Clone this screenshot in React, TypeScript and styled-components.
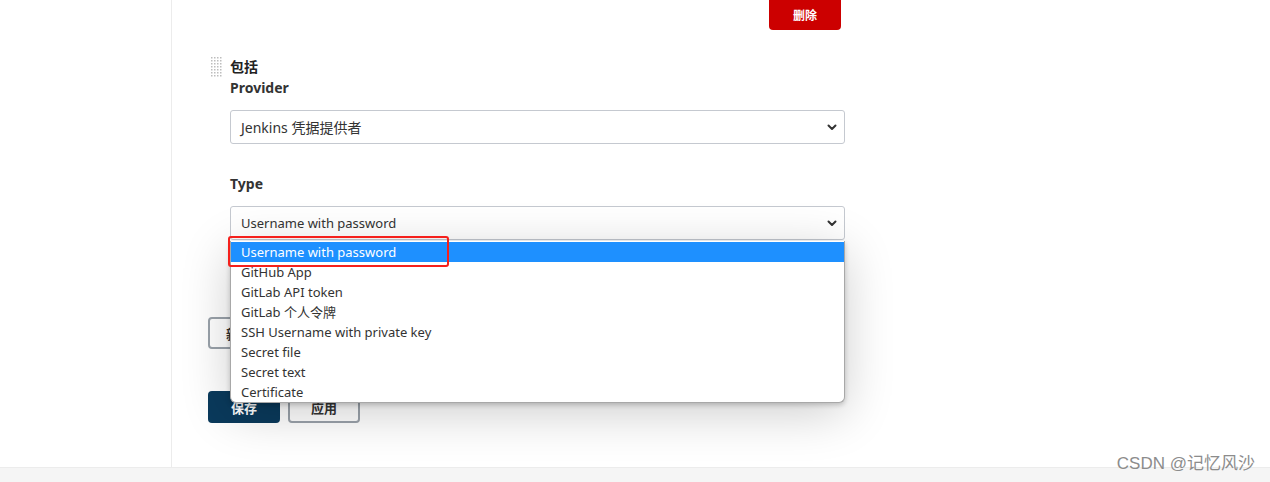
import styled, { createGlobalStyle } from "styled-components";

const GlobalStyle = createGlobalStyle`
  html, body {
    margin: 0;
    padding: 0;
    background: #fff;
    font-family: "Noto Sans", "Noto Sans CJK SC", sans-serif;
    color: #333;
  }
`;

const typeOptions = [
  "Username with password",
  "GitHub App",
  "GitLab API token",
  "GitLab 个人令牌",
  "SSH Username with private key",
  "Secret file",
  "Secret text",
  "Certificate",
];

const Chevron = () => (
  <svg width="10" height="7" viewBox="0 0 10 7">
    <polyline
      points="1.5,1.5 5,5 8.5,1.5"
      fill="none"
      stroke="#333"
      strokeWidth="2"
      strokeLinecap="round"
      strokeLinejoin="round"
    />
  </svg>
);

const DragHandle = () => (
  <svg width="12" height="21" viewBox="0 0 12 21">
    {Array.from({ length: 7 }).map((_, r) =>
      Array.from({ length: 4 }).map((_, c) => (
        <rect key={r + "_" + c} x={c * 3} y={r * 3} width="1.5" height="1.5" fill="#bdbdbd" />
      ))
    )}
  </svg>
);

export default function App() {
  return (
    <>
      <GlobalStyle />
      <Page>
        <Body>
          <Sidebar />
          <Main>
            <Form>
              <DeleteRow>
                <DeleteButton>删除</DeleteButton>
              </DeleteRow>

              <Chunk>
                <ChunkHeader>
                  <DragHandle />
                  <ChunkTitle>包括</ChunkTitle>
                </ChunkHeader>

                <Field>
                  <Label>Provider</Label>
                  <Select $size={14}>
                    <span>Jenkins 凭据提供者</span>
                    <Chevron />
                  </Select>
                </Field>

                <Field $gap={30}>
                  <Label>Type</Label>
                  <SelectWrap>
                    <Select>
                      <span>Username with password</span>
                      <Chevron />
                    </Select>
                    <Dropdown>
                      <Annotation />
                      {typeOptions.map((o, i) => (
                        <Option key={o} $active={i === 0}>
                          {o}
                        </Option>
                      ))}
                    </Dropdown>
                  </SelectWrap>
                </Field>
              </Chunk>

              <AddRow>
                <OutlineButton $wide>新增</OutlineButton>
              </AddRow>

              <Actions>
                <SaveButton>保存</SaveButton>
                <OutlineButton>应用</OutlineButton>
              </Actions>
            </Form>
          </Main>
        </Body>
        <Footer />
        <Watermark>CSDN @记忆风沙</Watermark>
      </Page>
    </>
  );
}

const Page = styled.div`
  position: relative;
  width: 1270px;
  height: 482px;
  overflow: hidden;
  display: flex;
  flex-direction: column;
`;

const Body = styled.div`
  display: flex;
  height: 468px;
`;

const Sidebar = styled.div`
  width: 171px;
  flex-shrink: 0;
  border-right: 1px solid #ececec;
`;

const Main = styled.div`
  flex: 1;
  padding-left: 36px;
`;

const Form = styled.div`
  width: 637px;
  display: flex;
  flex-direction: column;
`;

const DeleteRow = styled.div`
  display: flex;
  justify-content: flex-end;
  padding-right: 4px;
  margin-top: -6px;
`;

const DeleteButton = styled.button`
  width: 72px;
  height: 36px;
  border: none;
  border-radius: 4px;
  background: #cc0000;
  color: #fff;
  font-family: inherit;
  font-size: 12px;
  font-weight: 700;
  padding: 6px 0 0;
`;

const Chunk = styled.div`
  margin-top: 27px;
  display: flex;
  flex-direction: column;
`;

const ChunkHeader = styled.div`
  display: flex;
  align-items: center;
  gap: 7px;
  padding-left: 3px;
  height: 20px;

  svg {
    margin-top: 1px;
  }
`;

const ChunkTitle = styled.div`
  font-size: 14px;
  font-weight: 600;
  color: #222;
  line-height: 20px;
`;

const Field = styled.div<{ $gap?: number }>`
  margin-top: ${(p) => p.$gap ?? 1}px;
  padding-left: 22px;
  display: flex;
  flex-direction: column;
  gap: 12px;
`;

const Label = styled.div`
  font-size: 14px;
  font-weight: 700;
  line-height: 20px;
  color: #333;
`;

const SelectWrap = styled.div`
  position: relative;
`;

const Select = styled.div<{ $size?: number }>`
  height: 34px;
  box-sizing: border-box;
  border: 1px solid #c5c9d0;
  border-radius: 3px;
  display: flex;
  align-items: center;
  justify-content: space-between;
  padding: 0 7px 0 10px;
  font-size: ${(p) => p.$size ?? 13}px;
  color: #333;
  background: #fff;
`;

const Dropdown = styled.div`
  position: absolute;
  top: 35px;
  left: 0;
  right: 0;
  z-index: 5;
  padding-top: 1px;
  background: #fff;
  border: 1px solid #a8a8a8;
  border-top: none;
  border-radius: 0 0 6px 6px;
  box-sizing: border-box;
  box-shadow: 0 10px 50px rgba(0, 0, 0, 0.2), 0 2px 5px rgba(0, 0, 0, 0.2);
`;

const Option = styled.div<{ $active?: boolean }>`
  height: 20px;
  line-height: 20px;
  padding-left: 10px;
  font-size: 13px;
  color: ${(p) => (p.$active ? "#fff" : "#333")};
  background: ${(p) => (p.$active ? "#1e90ff" : "transparent")};
`;

const Annotation = styled.div`
  position: absolute;
  left: -3px;
  top: -5px;
  width: 221px;
  height: 31px;
  box-sizing: border-box;
  border: 2px solid #f5201c;
  border-radius: 3px;
  z-index: 2;
`;

const AddRow = styled.div`
  margin-top: 77px;
  display: flex;
`;

const Actions = styled.div`
  margin-top: 42px;
  display: flex;
  gap: 8px;
`;

const buttonBase = `
  width: 72px;
  height: 32px;
  box-sizing: border-box;
  border-radius: 4px;
  font-family: inherit;
  font-size: 13px;
  font-weight: 700;
`;

const SaveButton = styled.button`
  ${buttonBase}
  border: none;
  background: #0a3a5c;
  color: #fff;
`;

const OutlineButton = styled.button<{ $wide?: boolean }>`
  ${buttonBase}
  width: ${(p) => (p.$wide ? "auto" : "72px")};
  padding: ${(p) => (p.$wide ? "0 16px" : "0")};
  border: 2px solid #9aa2aa;
  background: #fff;
  color: #333;
`;

const Footer = styled.div`
  height: 14px;
  background: #f5f5f5;
  border-top: 1px solid #ececec;
`;

const Watermark = styled.div`
  position: absolute;
  right: 15px;
  bottom: 8px;
  font-size: 17px;
  color: #8c8c8c;
  font-family: "Liberation Sans", "Noto Sans CJK SC", sans-serif;
  z-index: 10;
`;
